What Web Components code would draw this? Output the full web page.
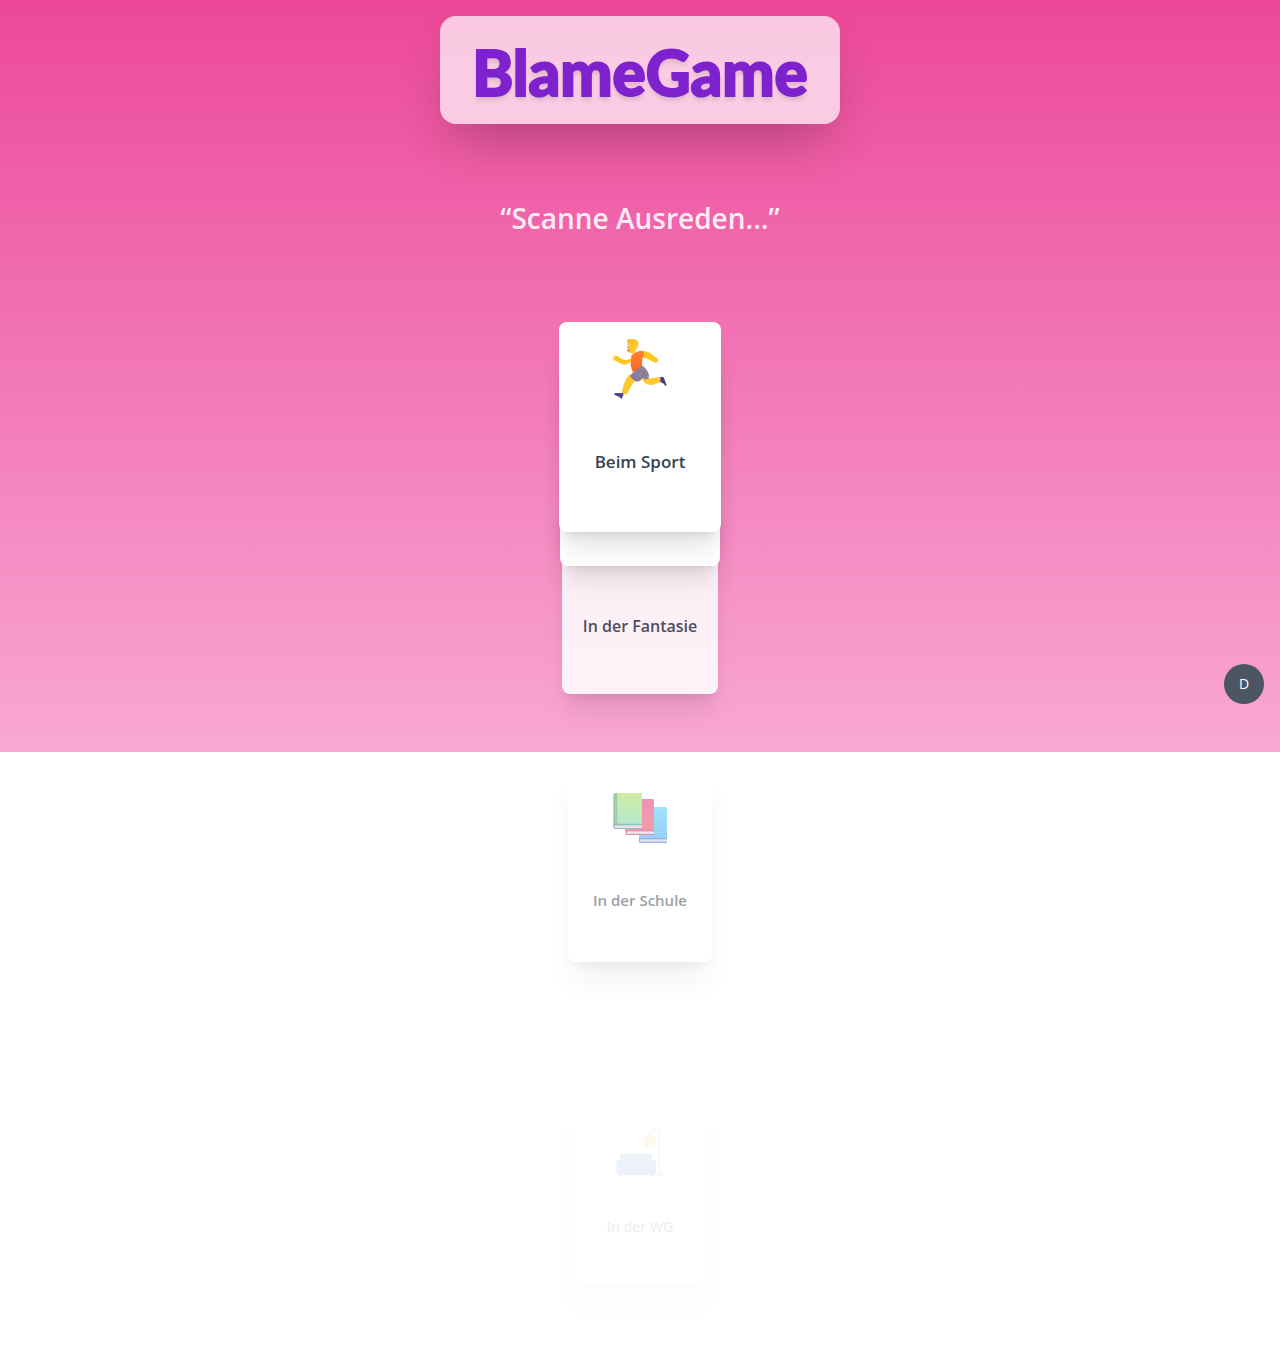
<!DOCTYPE html>
<html lang="de">
<head>
<meta charset="utf-8">
<meta name="viewport" content="width=device-width, initial-scale=1">
<title>BlameGame</title>
<style>
  body { margin: 0; background: #fff; font-family: "Open Sans", "Noto Sans", sans-serif; }
</style>
</head>
<body>
<blame-app></blame-app>
<script>
const define = (name, html) => {
  const template = document.createElement("template");
  template.innerHTML = html;
  customElements.define(name, class extends HTMLElement {
    constructor() {
      super();
      this.attachShadow({ mode: "open" }).append(template.content.cloneNode(true));
    }
  });
};

define("blame-logo", `
  <style>
    :host { display: block; padding: 26px 32px 22px; border-radius: 16px; background: rgb(255 255 255 / .7);
      box-shadow: 0 25px 50px -12px rgb(0 0 0 / .25); }
    h1 { margin: 0; font: 900 62px/60px Lato, "Open Sans", sans-serif; color: #7e22ce;
      -webkit-text-stroke: 2px #7e22ce; text-shadow: 0 4px 4px rgb(0 0 0 / .12); }
  </style>
  <h1><slot></slot></h1>`);

define("blame-quote", `
  <style>
    :host { display: block; }
    p { margin: 0; font-size: 28px; line-height: 36px; font-weight: 600; color: rgb(255 255 255 / .9); text-align: center; }
  </style>
  <p><slot></slot></p>`);

define("blame-card", `
  <style>
    :host { display: flex; flex-direction: column; align-items: center; box-sizing: border-box; position: relative;
      width: 162px; height: 210px; padding-top: 8px; gap: 42px; border-radius: 8px; background: #fff; color: #374151;
      font-size: 17px; line-height: 28px; z-index: 5;
      box-shadow: 0 20px 25px -5px rgb(0 0 0 / .1), 0 8px 10px -6px rgb(0 0 0 / .1); }
    :host([depth="1"]) { width: 160px; height: 208px; margin-top: -174px; z-index: 4; opacity: .99; }
    :host([depth="2"]) { width: 156px; height: 203px; margin-top: -75px; gap: 37px; font-size: 16px; z-index: 3; opacity: .87; }
    :host([depth="3"]) { width: 144px; height: 187px; margin-top: 81px; padding-top: 5px; gap: 32px;
      font-size: 15px; line-height: 24px; z-index: 2; opacity: .5; }
    :host([depth="4"]) { width: 130px; height: 170px; margin-top: 152px; padding-top: 1px; gap: 26px;
      font-size: 14px; line-height: 20px; z-index: 1; opacity: .08; }
    .icon { width: 80px; height: 76px; }
    h2 { margin: 0; font-size: inherit; font-weight: 600; white-space: nowrap; }
  </style>
  <div class="icon"><slot name="icon"></slot></div>
  <h2><slot></slot></h2>`);

define("icon-runner", `
  <style>:host, svg { display: block; width: 80px; height: 76px; }</style>
  <svg viewBox="0 0 240 228" aria-hidden="true">
    <defs>
      <linearGradient id="shirt" x1="0" y1="0" x2="0" y2="1"><stop stop-color="#ff8030"/><stop offset="1" stop-color="#ff642e"/></linearGradient>
      <linearGradient id="shorts" x1="0" y1="1" x2="1" y2="0"><stop stop-color="#8d75a2"/><stop offset="1" stop-color="#8c8a91"/></linearGradient>
      <linearGradient id="hair" x1="0" y1="0" x2="1" y2="1"><stop stop-color="#ffb51f"/><stop offset="1" stop-color="#ffd343"/></linearGradient>
    </defs>
    <path d="M127 64C142 63 152 68 160 77L172 85C178 94 171 101 161 96L143 87C137 84 129 84 122 82Z" fill="#ffc51f"/>
    <path d="M100 90C89 99 78 105 67 103L48 94C39 91 38 83 42 79C47 75 56 78 60 84L71 89C80 91 90 88 98 84Z" fill="#ffc51f"/>
    <path d="M126 138L143 134Q145 147 154 145L181 141L184 156L156 165C143 166 133 160 126 148Z" fill="#ffc82f"/>
    <path d="M91 133L108 151C97 158 90 180 79 194L65 190C69 166 76 147 87 135Z" fill="#ffc82f"/>
    <path d="M44 189L71 190L69 197L65 207L57 200L43 194Z" fill="#4d4089"/>
    <path d="M181 142Q188 137 192 144L200 165L197 168L189 160L181 156Z" fill="#4d4089"/>
    <path d="M94 77C100 68 114 63 126 62L132 66C133 73 131 80 127 84L126 108C119 122 107 121 98 127L92 105Z" fill="url(#shirt)"/>
    <path d="M126 106C136 113 144 123 147 134L146 145L136 149L129 143L122 151Q114 158 106 154L91 142L92 134Z" fill="url(#shorts)"/>
    <path d="M128 141L134 128" stroke="#776788" stroke-width="2"/>
    <path d="M84 36L101 34L108 60L102 70Q91 70 84 66L81 55Z" fill="#ffc928"/>
    <path d="M81 30Q87 26 94 28Q101 25 107 29Q117 32 116 42Q116 52 109 57L105 68L100 62L98 47Q95 39 90 40L82 38Z" fill="url(#hair)"/>
    <ellipse cx="87" cy="49" rx="3" ry="4" fill="#fff"/><circle cx="87" cy="50" r="2" fill="#684344"/>
    <path d="M82 61Q87 61 89 58L88 64Q84 67 82 61" fill="#d35350"/>
  </svg>`);

define("icon-books", `
  <style>:host, svg { display: block; width: 80px; height: 76px; }</style>
  <svg viewBox="0 0 240 228" aria-hidden="true">
    <defs>
      <linearGradient id="green" x1="0" y1="0" x2="0" y2="1"><stop stop-color="#a0dc49"/><stop offset="1" stop-color="#70d49b"/></linearGradient>
      <linearGradient id="red" x1="0" y1="0" x2="0" y2="1"><stop stop-color="#db2773"/><stop offset="1" stop-color="#e83e53"/></linearGradient>
      <linearGradient id="blue" x1="0" y1="0" x2="0" y2="1"><stop stop-color="#42c9f5"/><stop offset="1" stop-color="#31a0ed"/></linearGradient>
    </defs>
    <path d="M117 85Q117 81 121 81H198Q201 81 201 85V180H117Z" fill="url(#blue)"/>
    <path d="M117 174H201V189H120Q117 188 117 184Z" fill="#3768c2"/><path d="M120 178H201V185H120Z" fill="#cfc4e5"/>
    <path d="M75 62Q75 57 80 57H158Q162 57 162 61V154H75Z" fill="url(#red)"/>
    <path d="M76 149H162V165H80Q76 164 76 159Z" fill="#bb245e"/><path d="M80 154H162V162H80Z" fill="#dac6df"/>
    <path d="M40 44Q40 39 45 39H122Q126 39 126 43V134H40Z" fill="url(#green)"/>
    <path d="M40 44Q40 39 45 39H52V136H40Z" fill="#439c58"/>
    <path d="M40 131H126V147H44Q40 146 40 141Z" fill="#377c75"/><path d="M44 136H126V144H44Z" fill="#d5c7df"/>
  </svg>`);

define("icon-lounge", `
  <style>:host, svg { display: block; width: 80px; height: 76px; }</style>
  <svg viewBox="0 0 240 228" aria-hidden="true">
    <path d="M150 61V49Q152 41 163 41Q178 41 178 54V174" fill="none" stroke="#b6a7bb" stroke-width="5"/>
    <path d="M132 96V76Q132 60 150 60Q168 60 168 76V96Z" fill="#ffb31a"/>
    <path d="M168 182Q170 172 181 172Q192 173 195 182Z" fill="#f1a227"/>
    <path d="M60 121Q60 117 65 117H106L109 120L112 117H150Q156 117 156 123V164H60Z" fill="#2d75cf"/>
    <path d="M109 119V153H154" fill="none" stroke="#205ab0" stroke-width="2"/>
    <path d="M49 142Q49 135 55 135Q63 135 63 143V154H153V143Q153 135 161 135Q168 135 168 143V174L163 180H55L49 174Z" fill="#286acb"/>
    <path d="M54 179H65V182H54ZM151 179H163V182H151Z" fill="#5b4283"/>
  </svg>`);

define("debug-button", `
  <style>
    :host { display: block; }
    button { display: block; width: 40px; height: 40px; padding: 0; border: 0; border-radius: 50%; background: #4b5563;
      color: #fff; font: 400 14px/20px "Open Sans", sans-serif; cursor: pointer; }
  </style>
  <button type="button"><slot></slot></button>`);

define("blame-app", `
  <style>
    :host { display: block; min-height: 100vh; }
    main { position: relative; display: flex; flex-direction: column; align-items: center; padding: 16px;
      background: linear-gradient(#ec4899, #f9a8d4); }
    blame-quote { margin-top: 76px; }
    .stack { display: flex; flex-direction: column; align-items: center; height: 414px; margin-top: 86px; }
    blame-card { flex: none; }
    debug-button { position: absolute; right: 16px; bottom: 48px; }
  </style>
  <main>
    <blame-logo>BlameGame</blame-logo>
    <blame-quote>“Scanne Ausreden...”</blame-quote>
    <div class="stack">
      <blame-card depth="0"><icon-runner slot="icon"></icon-runner>Beim Sport</blame-card>
      <blame-card depth="1"></blame-card>
      <blame-card depth="2">In der Fantasie</blame-card>
      <blame-card depth="3"><icon-books slot="icon"></icon-books>In der Schule</blame-card>
      <blame-card depth="4"><icon-lounge slot="icon"></icon-lounge>In der WG</blame-card>
    </div>
    <debug-button>D</debug-button>
  </main>`);
</script>
</body>
</html>
